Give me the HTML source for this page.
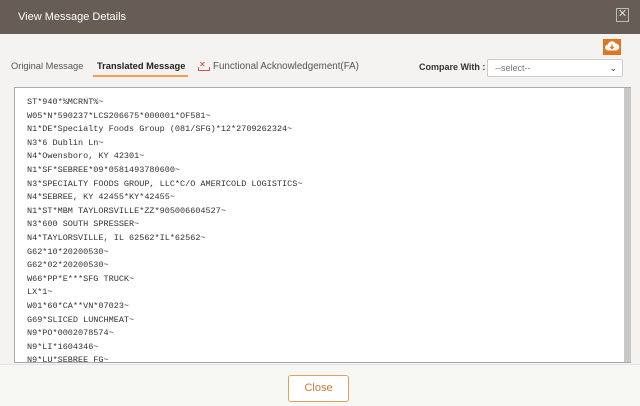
<!DOCTYPE html>
<html><head><style>
*{box-sizing:border-box;margin:0;padding:0}
body{width:640px;height:406px;background:#f4f3f1;font-family:"Liberation Sans",sans-serif;position:relative;overflow:hidden}
.hdr{position:absolute;left:0;top:0;width:640px;height:34px;background:#675d56;color:#fff;font-size:11px;line-height:34px;padding-left:18px}
.x{position:absolute;right:11px;top:8px;width:13px;height:14px;border:1px solid #bbb;color:#ddd;font-size:11px;line-height:11px;text-align:center}
.dl{position:absolute;left:603px;top:39px;width:18px;height:16px;background:#e07521}
.tabs{position:absolute;top:61px;font-size:9.3px;color:#555;white-space:nowrap}
.sel{position:absolute;left:487px;top:59px;width:136px;height:18px;background:#fff;border:1px solid #ccc;border-radius:2px;font-size:9px;color:#777;padding-left:7px;line-height:16px}
.box{position:absolute;left:14px;top:87px;width:617px;height:276px;background:#fff;border:1px solid #aaa;border-right:none;overflow:hidden}
.sb{position:absolute;right:0;top:0;width:7px;height:276px;background:#c8c8c8}
pre{position:absolute;left:12px;top:8px;font-family:"Liberation Mono",monospace;font-size:8.5px;line-height:13.6px;color:#333}
.ft{position:absolute;left:0;top:364px;width:640px;height:42px;background:#f7f7f4;border-top:1px solid #e5e5e5}
.btn{position:absolute;left:288px;top:375px;width:61px;height:27px;border:1px solid #e0a060;border-radius:3px;background:#fff;color:#c87a3a;font-size:11px;text-align:center;line-height:25px}
</style></head><body>
<div class="hdr">View Message Details<div class="x">✕</div></div>
<div class="dl"><svg width="18" height="16" viewBox="0 0 18 16"><path d="M5 11.5a3 3 0 0 1 0-6 4 4 0 0 1 7.5-1 3 3 0 0 1 0.5 7z" fill="#fff"/><path d="M9 5.5v4M7.3 8l1.7 1.7 1.7-1.7" stroke="#e07521" stroke-width="1.3" fill="none"/></svg></div>
<div class="tabs" style="left:11px">Original Message</div>
<div class="tabs" style="left:97px;color:#222;font-weight:bold">Translated Message</div>
<div style="position:absolute;left:93px;top:75px;width:95px;height:2px;background:#f0a050"></div>
<div class="tabs" style="left:199px;color:#e03030;font-size:8px;top:60px">✕</div>
<div style="position:absolute;left:198px;top:67px;width:12px;height:4px;border:1px solid #e05050;border-top:none"></div>
<div class="tabs" style="left:213px;font-size:9.8px">Functional Acknowledgement(FA)</div>
<div class="tabs" style="left:419px;color:#333;font-weight:bold;font-size:9px;top:62px">Compare With :</div>
<div class="sel">--select--<span style="position:absolute;right:5px;top:0;color:#333;font-size:9px">⌄</span></div>
<div class="box"><div class="sb"></div><pre>ST*940*%MCRNT%~
W05*N*590237*LCS206675*000001*OF581~
N1*DE*Specialty Foods Group (081/SFG)*12*2709262324~
N3*6 Dublin Ln~
N4*Owensboro, KY 42301~
N1*SF*SEBREE*09*0581493780600~
N3*SPECIALTY FOODS GROUP, LLC*C/O AMERICOLD LOGISTICS~
N4*SEBREE, KY 42455*KY*42455~
N1*ST*MBM TAYLORSVILLE*ZZ*905006604527~
N3*600 SOUTH SPRESSER~
N4*TAYLORSVILLE, IL 62562*IL*62562~
G62*10*20200530~
G62*02*20200530~
W66*PP*E***SFG TRUCK~
LX*1~
W01*60*CA**VN*07023~
G69*SLICED LUNCHMEAT~
N9*PO*0002078574~
N9*LI*1604346~
N9*LU*SEBREE FG~</pre></div>
<div class="ft"></div>
<div class="btn">Close</div>
</body></html>
